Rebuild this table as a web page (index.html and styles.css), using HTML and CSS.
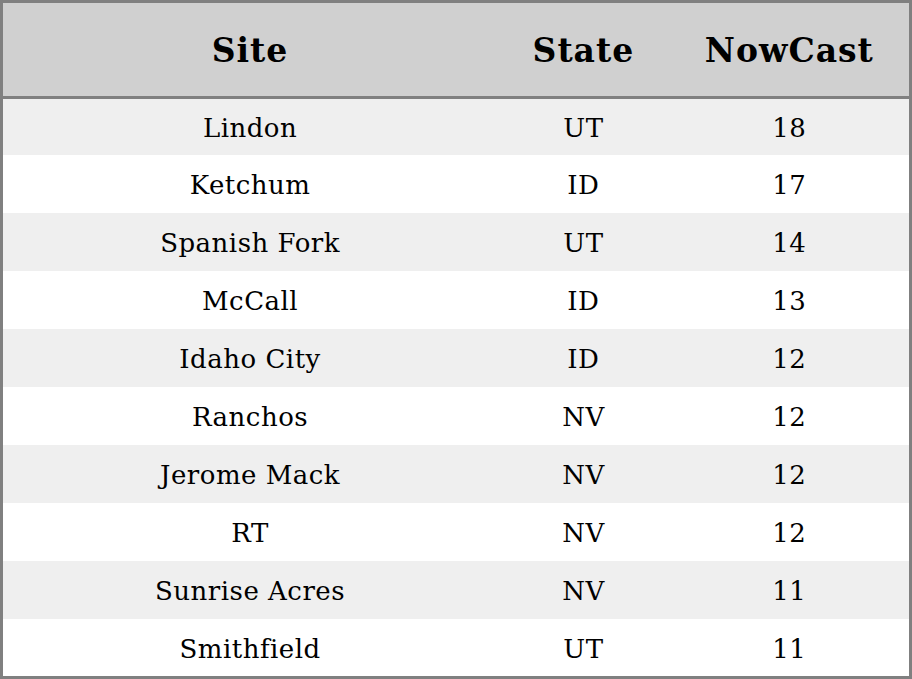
FILE: index.html
```html
<!DOCTYPE html>
<html>
<head>
<meta charset="utf-8">
<link rel="stylesheet" href="styles.css">
</head>
<body>
<table class="aq-table">
  <colgroup>
    <col class="col-site">
    <col class="col-state">
    <col class="col-now">
  </colgroup>
  <thead>
    <tr><th>Site</th><th>State</th><th>NowCast</th></tr>
  </thead>
  <tbody>
    <tr><td>Lindon</td><td>UT</td><td>18</td></tr>
    <tr><td>Ketchum</td><td>ID</td><td>17</td></tr>
    <tr><td>Spanish Fork</td><td>UT</td><td>14</td></tr>
    <tr><td>McCall</td><td>ID</td><td>13</td></tr>
    <tr><td>Idaho City</td><td>ID</td><td>12</td></tr>
    <tr><td>Ranchos</td><td>NV</td><td>12</td></tr>
    <tr><td>Jerome Mack</td><td>NV</td><td>12</td></tr>
    <tr><td>RT</td><td>NV</td><td>12</td></tr>
    <tr><td>Sunrise Acres</td><td>NV</td><td>11</td></tr>
    <tr><td>Smithfield</td><td>UT</td><td>11</td></tr>
  </tbody>
</table>
</body>
</html>
```
FILE: styles.css
```css
html, body {
  margin: 0;
  padding: 0;
  background: #ffffff;
}
body {
  font-family: "DejaVu Serif", serif;
  color: #000;
}
.aq-table {
  width: 912px;
  border-collapse: collapse;
  border: 3px solid #808080;
  table-layout: fixed;
}
.col-site { width: 494px; }
.col-state { width: 172px; }
.col-now { width: 240px; }
.aq-table th {
  background: #d0d0d0;
  font-size: 33px;
  letter-spacing: 1px;
  font-weight: bold;
  height: 91px;
  padding: 2px 0 0;
  border-bottom: 3px solid #808080;
  text-align: center;
}
.aq-table td {
  font-size: 26px;
  letter-spacing: 0.5px;
  height: 56px;
  padding: 2px 0 0;
  text-align: center;
}
.aq-table tbody tr:first-child td { height: 54px; }
.aq-table tbody tr:last-child td { height: 55px; }
.aq-table tbody tr:nth-child(odd) td { background: #efefef; }
.aq-table tbody tr:nth-child(even) td { background: #ffffff; }
```
